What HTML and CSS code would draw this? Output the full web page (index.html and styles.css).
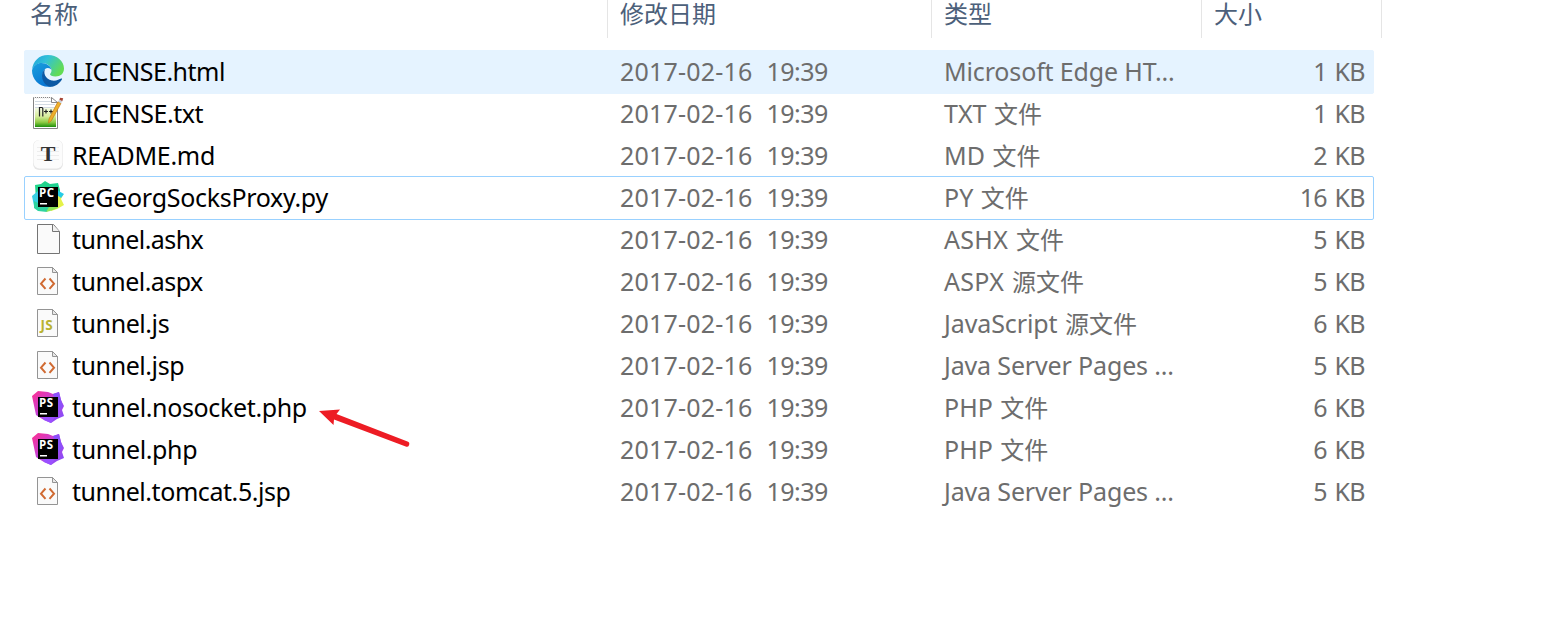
FILE: index.html
```html
<!DOCTYPE html>
<html lang="zh-CN">
<head>
<meta charset="utf-8">
<title>文件列表</title>
<link rel="stylesheet" href="styles.css">
</head>
<body>
<svg class="defs" width="0" height="0" aria-hidden="true">
  <defs>
    <linearGradient id="edgeTop" x1="0" y1="0" x2="1" y2="0.5"><stop offset="0" stop-color="#1f9fdc"/><stop offset=".45" stop-color="#31c1d8"/><stop offset="1" stop-color="#62dc55"/></linearGradient>
    <linearGradient id="edgeLeft" x1="0" y1="0" x2=".5" y2="1"><stop offset="0" stop-color="#1aa0dd"/><stop offset="1" stop-color="#0876d3"/></linearGradient>
    <linearGradient id="note" x1="0" y1="0" x2="0" y2="1"><stop offset="0" stop-color="#f4fbe4"/><stop offset=".45" stop-color="#d6ec9a"/><stop offset=".75" stop-color="#8fcb45"/><stop offset="1" stop-color="#1e8f0c"/></linearGradient>
    <linearGradient id="psg" x1="0" y1="0" x2="1" y2="1"><stop offset="0" stop-color="#ff2f8e"/><stop offset=".45" stop-color="#c442d8"/><stop offset="1" stop-color="#7b4dff"/></linearGradient>
    <linearGradient id="pcg" x1="0" y1="0" x2="1" y2="1"><stop offset="0" stop-color="#21d789"/><stop offset="1" stop-color="#1dca98"/></linearGradient>
  </defs>
  <symbol id="edge" viewBox="0 0 32 32">
    <path fill="url(#edgeTop)" d="M0 15C1 6 7 0 16 0c9 0 16 6 16 13.500 0 5-3.500 8-8.500 8-3.500 0-5.500-1-5.500-2.200 0-.8 1.500-1.400 1.500-3.800 0-4-4.500-7.500-9.500-7.500C5 8 1.500 11 0 15z"/>
    <path fill="url(#edgeLeft)" d="M0 15.500C1.200 10.500 5 8 9.500 8c5 0 10 3.300 10 7.500 0-1.500-2-2.700-4-2.500-3 .4-5 4-5 7.500 0 5 4 9.500 9 11C9 33.500 0 25.500 0 15.500z"/>
    <path fill="#0c59a4" d="M13 14.500c-1.600 2.600-.4 9.500 7 11 4 .7 7.500-1.300 9.200-2 .8-.2 1.100.3.700.9C27.500 28.500 23 32 18 31.800c-4.500-1-8-6-8-10.800 0-3 1.200-5.400 3-6.500z"/>
  </symbol>
  <symbol id="notepad" viewBox="0 0 32 32">
    <path fill="#fff" stroke="#858585" d="M1.500 .5h18l6 5v26h-24z"/>
    <path stroke="#d3dbe3" d="M3 4.500h16M3 7.500h20M3 10.500h20"/>
    <path fill="url(#note)" d="M3 11h21v19H3z"/>
    <path stroke="#eee" stroke-width="2" stroke-dasharray="1 1" d="M2 1h18"/>
    <path fill="none" stroke="#888" d="M19.500 .5v5h6"/>
    <path fill="none" stroke="#222" stroke-width="1.200" d="M7.500 19.500v-9h2.500l.8 1v8M12 14.500h4m-2-2v4m3-2h4m-2-2v4"/>
    <path fill="#edb02b" stroke="#c47a16" stroke-width=".7" d="M26 4.500l3 1.800-9.500 17.200-3 2.500 .5-4z"/>
    <path fill="#c8d0db" d="M26 4.500l1.300-2 3 1.800-1.300 2z"/><path fill="#a84737" d="M27.300 2.500l.9-1.800 3 .5-.9 3.100z"/>
  </symbol>
  <symbol id="typora" viewBox="0 0 32 32">
    <rect x="1" y="1" width="30" height="30" rx="6" fill="#e6e6e6"/><rect x="1.500" y="1" width="29" height="28.500" rx="6" fill="#fcfcfc"/>
    <path stroke="#ededed" d="M5 8.500h22M5 12.500h22M5 16.500h22M5 20.500h22"/>
  </symbol>
  <symbol id="pycharm" viewBox="0 0 32 32">
    <path fill="url(#pcg)" d="M3 4L9 3l4-3 5 3 8-1 2 7 0 15-9 4-8-2-7-7z"/>
    <path fill="#e5f249" d="M25 13l6 1-2 4 3 6-7 4-6 2-1-5z"/><path fill="#25cbe8" d="M25 9l7 4-3 4-4-3z"/>
    <path fill="#39cfe3" d="M0 15l6-5v14l-4 1z"/><path fill="#2fd39f" d="M2 20l6 3 10 2-3 6-9-1-4-3z"/><path fill="#8fe65a" d="M17 26l8-2 1 3-8 3-4 1z"/>
    <path d="M6 6h20v20H6z"/><path fill="#fff" d="M8 22h7v1.500H8z"/>
  </symbol>
  <symbol id="phpstorm" viewBox="0 0 32 32">
    <path fill="url(#psg)" d="M0 5L6 0l10 1 5 2 6-2 2 8 3 6-2 4 2 6-7 3-6 4-7-3-5-3-3-2z"/>
    <path fill="#8b50fa" d="M21 3l6-2 2 8 2 6-5 5z"/><path fill="#9b50ff" d="M11 26h12l-4 6-7-3z"/>
    <path d="M6 6h20v20H6z"/><path fill="#fff" d="M8 22h7v1.500H8z"/>
  </symbol>
  <symbol id="blank" viewBox="0 0 32 32">
    <path fill="#fafafa" stroke="#747474" d="M5.500 1.500h16l6 7v22h-22z"/><path fill="#f0f0f0" stroke="#747474" d="M20.500 1.500v7h7"/>
  </symbol>
  <symbol id="page" viewBox="0 0 32 32">
    <path fill="#fafafa" stroke="#949494" d="M5.500 2.500h15l5 5v22h-20z"/><path fill="#e8e8e8" stroke="#949494" d="M20.500 2.500v5h5z"/>
  </symbol>
  <symbol id="code" viewBox="0 0 32 32">
    <use href="#page"/><path fill="none" stroke="#d06a32" stroke-width="2" d="M13.500 13.500L9 18.700l4.500 5.200M17.500 13.500l4.500 5.200-4.500 5.200"/>
  </symbol>
</svg>

<main class="files">
  <header class="head">
    <div class="col c-name">名称</div><div class="col c-date">修改日期</div><div class="col c-type">类型</div><div class="col c-size">大小</div>
  </header>
  <ul class="list">
    <li class="row hover"><svg class="icon"><use href="#edge"/></svg><span class="name t50">LICENSE.html</span><span class="date"><span>2017-02-16</span><span>19:39</span></span><span class="type t15">Microsoft Edge HT...</span><span class="size">1 KB</span></li>
    <li class="row"><svg class="icon"><use href="#notepad"/></svg><span class="name t45">LICENSE.txt</span><span class="date"><span>2017-02-16</span><span>19:39</span></span><span class="type">TXT <i>文件</i></span><span class="size">1 KB</span></li>
    <li class="row"><svg class="icon"><use href="#typora"/><text x="16" y="22" class="serif-mark">T</text></svg><span class="name t30">README.md</span><span class="date"><span>2017-02-16</span><span>19:39</span></span><span class="type">MD <i>文件</i></span><span class="size">2 KB</span></li>
    <li class="row focus"><svg class="icon"><use href="#pycharm"/><text x="7" y="15.500" class="brand-mark">PC</text></svg><span class="name t30">reGeorgSocksProxy.py</span><span class="date"><span>2017-02-16</span><span>19:39</span></span><span class="type">PY <i>文件</i></span><span class="size">16 KB</span></li>
    <li class="row"><svg class="icon"><use href="#blank"/></svg><span class="name t55">tunnel.ashx</span><span class="date"><span>2017-02-16</span><span>19:39</span></span><span class="type wide">ASHX <i>文件</i></span><span class="size">5 KB</span></li>
    <li class="row"><svg class="icon"><use href="#code"/></svg><span class="name t55">tunnel.aspx</span><span class="date"><span>2017-02-16</span><span>19:39</span></span><span class="type wide">ASPX <i>源文件</i></span><span class="size">5 KB</span></li>
    <li class="row"><svg class="icon"><use href="#page"/><text x="8.500" y="23" class="js-mark">JS</text></svg><span class="name t45">tunnel.js</span><span class="date"><span>2017-02-16</span><span>19:39</span></span><span class="type tight">JavaScript <i>源文件</i></span><span class="size">6 KB</span></li>
    <li class="row"><svg class="icon"><use href="#code"/></svg><span class="name t45">tunnel.jsp</span><span class="date"><span>2017-02-16</span><span>19:39</span></span><span class="type t15">Java Server Pages ...</span><span class="size">5 KB</span></li>
    <li class="row"><svg class="icon"><use href="#phpstorm"/><text x="7" y="15.500" class="brand-mark">PS</text></svg><span class="name t35">tunnel.nosocket.php</span><span class="date"><span>2017-02-16</span><span>19:39</span></span><span class="type">PHP <i>文件</i></span><span class="size">6 KB</span></li>
    <li class="row"><svg class="icon"><use href="#phpstorm"/><text x="7" y="15.500" class="brand-mark">PS</text></svg><span class="name t35">tunnel.php</span><span class="date"><span>2017-02-16</span><span>19:39</span></span><span class="type">PHP <i>文件</i></span><span class="size">6 KB</span></li>
    <li class="row"><svg class="icon"><use href="#code"/></svg><span class="name t45">tunnel.tomcat.5.jsp</span><span class="date"><span>2017-02-16</span><span>19:39</span></span><span class="type t15">Java Server Pages ...</span><span class="size">5 KB</span></li>
  </ul>
  <svg class="arrow" viewBox="0 0 94 40"><path fill="#ed1c24" d="M1 3L22 1.500 18.500 6 89.500 33.500A2.600 2.600 0 0 1 87.700 38.500L16 11.500 15.500 17z"/></svg>
</main>
</body>
</html>
```

FILE: styles.css
```css
* { box-sizing: border-box; }
body { margin: 0; background: #fff; font-family: "Noto Sans", "Noto Sans CJK SC", sans-serif; font-size: 25px; color: #6d6d6d; }
.defs { position: absolute; }
.files { position: relative; height: 629px; overflow: hidden; }
.head { display: flex; height: 38px; margin-bottom: 12px; padding-left: 24px; }
.col { border-right: 1px solid #e5e5e5; padding-left: 12px; font: 24px/26px "Noto Sans CJK SC", sans-serif; color: #4c607a; }
.c-name { width: 584px; padding-left: 6px; }
.c-date { width: 324px; }
.c-type { width: 270px; }
.c-size { width: 180px; }
.list { list-style: none; margin: 0 0 0 24px; padding: 0; width: 1350px; }
.row { display: grid; grid-template-columns: 40px 548px 324px 260px 1fr; align-items: center; height: 44px; margin-bottom: -2px; padding: 0 7px 2px; border: 1px solid transparent; border-radius: 2px; line-height: 40px; white-space: pre; }
.hover { background: #e5f3ff; border-color: #e5f3ff; }
.focus { border-color: #99d1ff; }
.icon { width: 32px; height: 32px; }
.name { color: #000; }
.t15 { letter-spacing: -.15px; }
.t30 { letter-spacing: -.3px; }
.t35 { letter-spacing: -.36px; }
.t45 { letter-spacing: -.43px; }
.t50 { letter-spacing: -.5px; }
.t55 { letter-spacing: -.55px; }
.wide { letter-spacing: .3px; }
.tight { letter-spacing: -.1px; }
.date { display: flex; gap: 14px; letter-spacing: .2px; }
.date span + span { letter-spacing: -.5px; }
.type i { font: 24px/1 "Noto Sans CJK SC", sans-serif; letter-spacing: 0; margin-left: 1px; }
.size { text-align: right; letter-spacing: -.6px; word-spacing: 1.5px; padding-right: 1px; }
.arrow { position: absolute; left: 318px; top: 408px; width: 94px; height: 40px; }
.serif-mark { font: bold 22px "Liberation Serif", serif; fill: #333; text-anchor: middle; }
.brand-mark { font: bold 11.500px "Open Sans", sans-serif; fill: #fff; letter-spacing: .5px; }
.js-mark { font: bold 13.500px "Open Sans", sans-serif; fill: #b9b331; letter-spacing: .3px; }
```
